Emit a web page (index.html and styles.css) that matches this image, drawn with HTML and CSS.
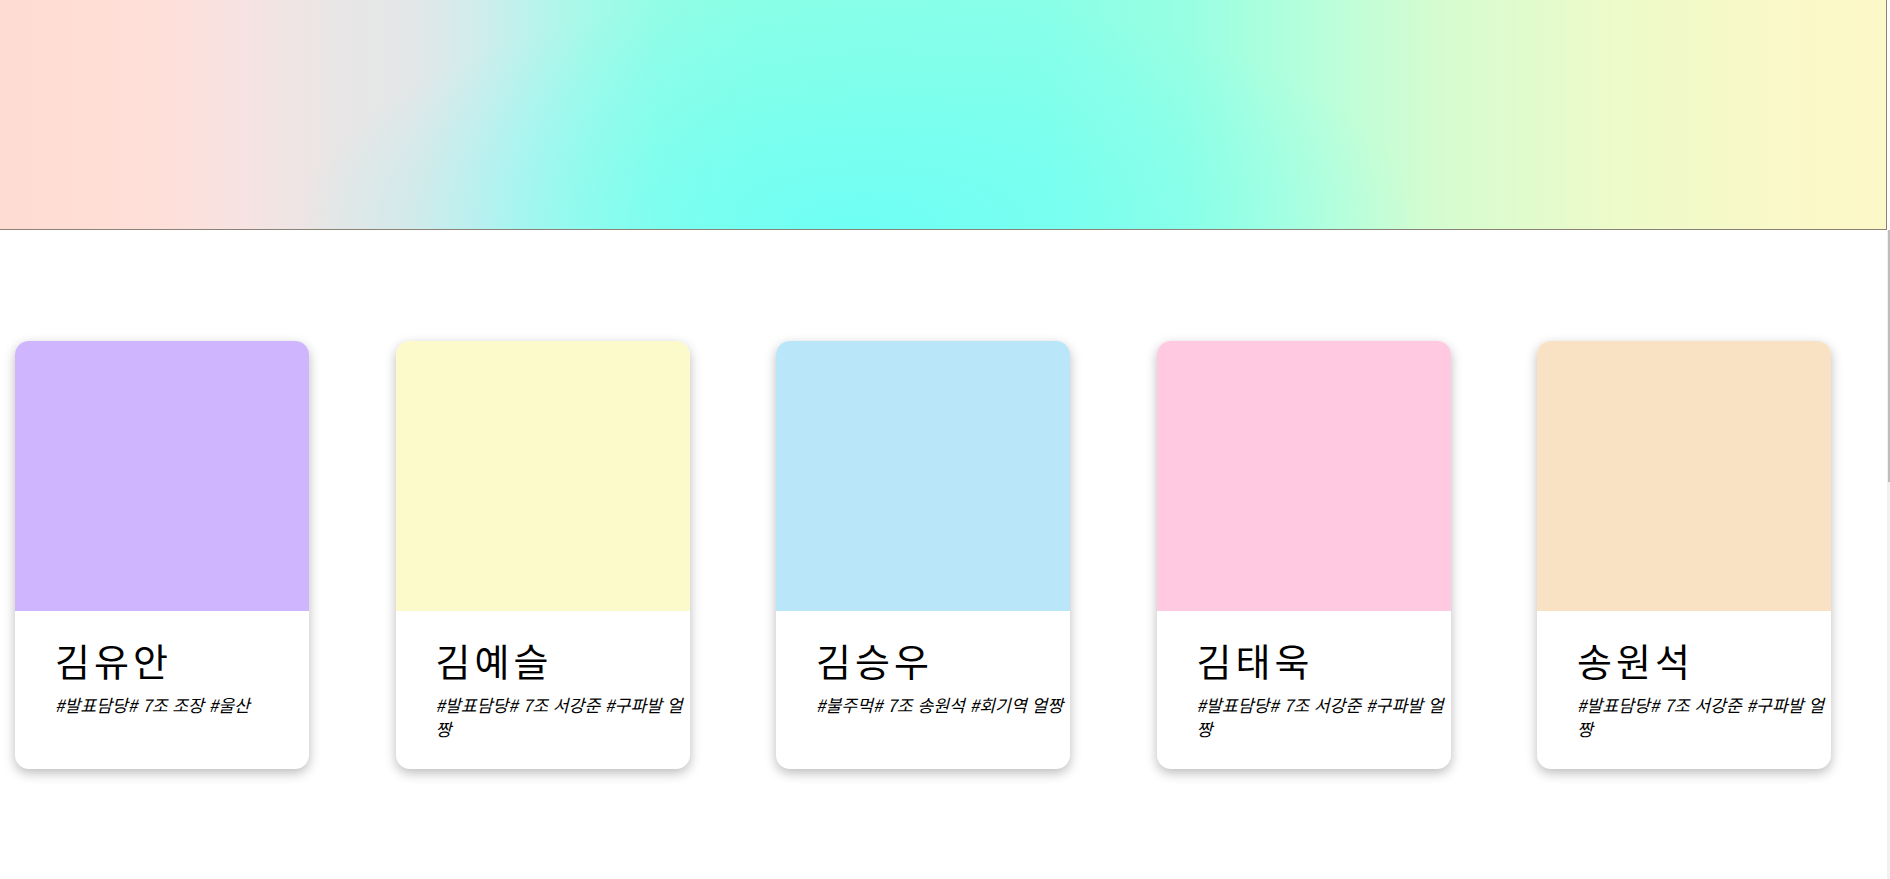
FILE: index.html
```html
<!DOCTYPE html>
<html lang="ko">
<head>
  <meta charset="UTF-8" />
  <title>7조 소개</title>
  <link rel="stylesheet" href="styles.css">
</head>
<body>
  <header class="banner"></header>
  <div class="page">
    <main class="cards">
      <div class="card">
        <div class="card-img purple"></div>
        <div class="card-body">
          <h2 class="card-name">김유안</h2>
          <p class="card-tags">#발표담당# 7조 조장 #울산</p>
        </div>
      </div>
      <div class="card">
        <div class="card-img yellow"></div>
        <div class="card-body">
          <h2 class="card-name">김예슬</h2>
          <p class="card-tags">#발표담당# 7조 서강준 #구파발 얼짱</p>
        </div>
      </div>
      <div class="card">
        <div class="card-img blue"></div>
        <div class="card-body">
          <h2 class="card-name">김승우</h2>
          <p class="card-tags">#불주먹# 7조 송원석 #회기역 얼짱</p>
        </div>
      </div>
      <div class="card">
        <div class="card-img pink"></div>
        <div class="card-body">
          <h2 class="card-name">김태욱</h2>
          <p class="card-tags">#발표담당# 7조 서강준 #구파발 얼짱</p>
        </div>
      </div>
      <div class="card">
        <div class="card-img peach"></div>
        <div class="card-body">
          <h2 class="card-name">송원석</h2>
          <p class="card-tags">#발표담당# 7조 서강준 #구파발 얼짱</p>
        </div>
      </div>
    </main>
    <div class="scroll-track"><div class="scroll-thumb"></div></div>
  </div>
</body>
</html>
```

FILE: styles.css
```css
body {
  margin: 0;
  font-family: "Noto Sans CJK KR", "Noto Sans", sans-serif;
  color: #000;
  background: #fff;
  overflow: hidden;
}
.banner {
  box-sizing: border-box;
  width: calc(100% - 3px);
  height: 230px;
  border-right: 1px solid #8a8276;
  border-bottom: 1px solid #8a8276;
  background:
    radial-gradient(ellipse 560px 240px at 860px 100%, rgba(100,255,250,0.7), rgba(100,255,250,0) 100%),
    linear-gradient(90deg, #ffdcd2 0%, #fedfd9 9%, #f6e3e2 13%, #e8e6e6 18%, #e3e7e8 22%, #d2ecec 25%, #bcf2ec 28%, #a6f9e8 31%, #92fde6 35%, #8affe6 40%, #88ffe8 55%, #98ffe2 63%, #b8ffdb 70%, #d4fcd0 76%, #eefac9 86%, #fbf8c8 96%, #fcf8c8 100%);
}
.page {
  display: flex;
  height: 649px;
}
.cards {
  flex: 1;
  display: flex;
  align-items: flex-start;
  gap: 86.5px;
  padding: 111px 0 0 15px;
}
.card {
  flex-shrink: 0;
  width: 294px;
  height: 428px;
  display: flex;
  flex-direction: column;
  background: #fff;
  border-radius: 14px;
  overflow: hidden;
  box-shadow: 0 4px 12px rgba(0,0,0,0.27);
}
.card-img { height: 270px; }
.purple { background: #cfb5fe; }
.yellow { background: #fcf9cb; }
.blue { background: #b9e6f9; }
.pink { background: #fec9e1; }
.peach { background: #f9e2c4; }
.card-body {
  padding: 26px 0 0 40px;
}
.card-name {
  margin: 0;
  font-size: 38px;
  line-height: 46px;
  font-weight: 400;
  letter-spacing: 4px;
}
.card-tags {
  margin: 10px 0 0;
  font-size: 17.2px;
  line-height: 24px;
  font-style: italic;
}
.scroll-track {
  width: 3px;
  background: #f1f1f1;
}
.scroll-thumb {
  width: 2px;
  margin-left: 1px;
  height: 252px;
  background: #bdbdbd;
}
```
